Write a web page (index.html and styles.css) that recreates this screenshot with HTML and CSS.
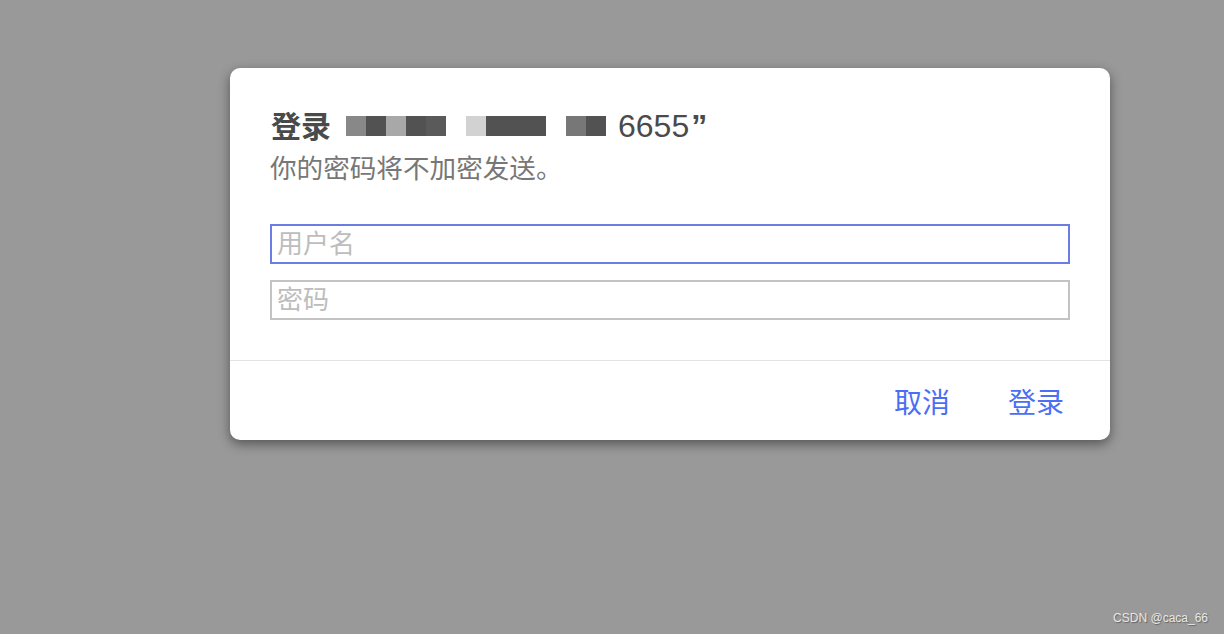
FILE: index.html
```html
<!DOCTYPE html>
<html lang="zh-CN">
<head>
    <meta charset="UTF-8">
    <meta name="viewport" content="width=device-width, initial-scale=1.0">
    <title>登录</title>
    <link rel="stylesheet" href="styles.css">
</head>
<body>

    <div class="page">
        <div class="dialog">
            <div class="dialog-body">
                <h1 class="title">
                    <span class="title-text">登录</span>
                    <span class="mosaic">
                        <i class="m1"></i><i class="m2"></i><i class="m3"></i><i class="m2"></i><i class="m4"></i>
                    </span>
                    <span class="mosaic">
                        <i class="m5"></i><i class="m2 wide"></i>
                    </span>
                    <span class="mosaic">
                        <i class="m6"></i><i class="m2"></i>
                    </span>
                    <span class="host">6655<b>”</b></span>
                </h1>
                <p class="subtitle">你的密码将不加密发送。</p>
                <input class="field active" type="text" placeholder="用户名">
                <input class="field" type="password" placeholder="密码">
            </div>
            <div class="dialog-footer">
                <button class="link-btn">取消</button>
                <button class="link-btn">登录</button>
            </div>
        </div>
    </div>

    <div class="watermark">CSDN @caca_66</div>

</body>
</html>
```

FILE: styles.css
```css
* {
    margin: 0;
    padding: 0;
    box-sizing: border-box;
}

body {
    font-family: 'Liberation Sans', 'Noto Sans CJK SC', sans-serif;
    background-color: #999999;
    min-height: 100vh;
    overflow: hidden;
}

.page {
    padding: 68px 0 0 230px;
}

.dialog {
    width: 880px;
    background: #ffffff;
    border-radius: 10px;
    box-shadow: 0px 4px 12px rgba(0, 0, 0, 0.45);
}

.dialog-body {
    padding: 40px 40px 40px 40px;
    border-bottom: 1px solid #e3e3e3;
}

.title {
    display: flex;
    align-items: center;
    height: 36px;
    color: #4a4a4a;
}

.title-text {
    font-family: 'Noto Sans CJK SC', sans-serif;
    font-size: 30px;
    font-weight: 700;
    line-height: 36px;
    margin-left: 1px;
    padding-bottom: 4px;
}

.mosaic {
    display: flex;
    margin-left: 20px;
}

.title-text + .mosaic {
    margin-left: 15px;
}

.mosaic i {
    display: block;
    width: 20px;
    height: 20px;
}

.mosaic i.wide {
    width: 60px;
}

.m1 { background: #888888; }
.m2 { background: #525252; }
.m3 { background: #a8a8a8; }
.m4 { background: #5a5a5a; }
.m5 { background: #d2d2d2; }
.m6 { background: #777777; }

.host {
    margin-left: 12px;
    font-size: 32px;
    font-weight: 400;
    line-height: 36px;
    color: #4a4a4a;
}

.host b {
    margin-left: 2px;
    font-weight: 700;
}

.subtitle {
    font-family: 'Noto Sans CJK SC', sans-serif;
    font-size: 26.6px;
    line-height: 30px;
    color: #777777;
    margin-top: 8px;
}

.field {
    display: block;
    width: 800px;
    height: 40px;
    margin-top: 42px;
    padding: 0 5px 6px 5px;
    border: 2px solid #c3c3c3;
    font-family: 'Noto Sans CJK SC', sans-serif;
    font-size: 26px;
    color: #333;
    outline: none;
}

.field + .field {
    margin-top: 16px;
}

.field.active {
    border-color: #6b7ce2;
}

.field::placeholder {
    color: #bdbdbd;
}

.dialog-footer {
    display: flex;
    justify-content: flex-end;
    align-items: center;
    gap: 58px;
    height: 79px;
    padding-right: 46px;
}

.link-btn {
    border: none;
    background: none;
    font-family: 'Noto Sans CJK SC', sans-serif;
    font-size: 28px;
    color: #4a6ef6;
    cursor: pointer;
}

.watermark {
    position: absolute;
    right: 16px;
    bottom: 9px;
    font-size: 12px;
    color: #e8e8e8;
    text-shadow: 1px 1px 1px rgba(0, 0, 0, 0.35);
}
```
